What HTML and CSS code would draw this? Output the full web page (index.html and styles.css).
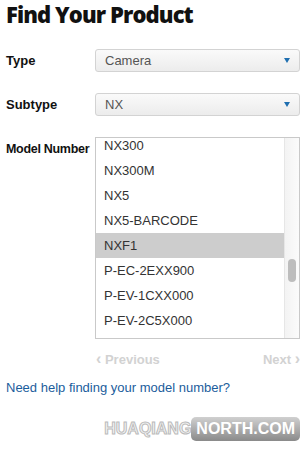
FILE: index.html
```html
<!DOCTYPE html>
<html lang="en">

<head>
    <meta charset="UTF-8">
    <title>Find Your Product</title>
    <link rel="stylesheet" href="styles.css">
</head>

<body>
    <h1 class="title">Find Your Product</h1>

    <div class="form">
        <div class="label">Type</div>
        <div class="select">
            <span>Camera</span>
            <span class="caret"></span>
        </div>

        <div class="label">Subtype</div>
        <div class="select">
            <span>NX</span>
            <span class="caret"></span>
        </div>

        <div class="label model">Model Number</div>
        <div class="listbox">
            <ul class="options">
                <li>NX300</li>
                <li>NX300M</li>
                <li>NX5</li>
                <li>NX5-BARCODE</li>
                <li class="selected">NXF1</li>
                <li>P-EC-2EXX900</li>
                <li>P-EV-1CXX000</li>
                <li>P-EV-2C5X000</li>
            </ul>
            <div class="track">
                <div class="thumb"></div>
            </div>
        </div>
    </div>

    <div class="pager">
        <span class="prev"><b>&lsaquo;</b> Previous</span>
        <span class="next">Next <b>&rsaquo;</b></span>
    </div>

    <a class="help" href="#">Need help finding your model number?</a>

    <div class="mark">
        <span class="mark-left">HUAQIANG</span><span class="mark-right">NORTH.COM</span>
    </div>
</body>

</html>
```
FILE: styles.css
```css
* {
    margin: 0;
    padding: 0;
    box-sizing: border-box;
}

body {
    width: 305px;
    height: 450px;
    padding: 0 5px 0 6px;
    background: #fff;
    font-family: "Liberation Sans", Arial, sans-serif;
    font-size: 13px;
    color: #333;
    overflow: hidden;
}

.title {
    font-family: "Open Sans", sans-serif;
    font-weight: 800;
    font-size: 22px;
    line-height: 28px;
    color: #111;
    letter-spacing: -0.9px;
}

.form {
    display: grid;
    grid-template-columns: 89px 205px;
    row-gap: 21px;
    margin-top: 21px;
    align-items: center;
}

.label {
    font-weight: bold;
    font-size: 13px;
    color: #111;
    white-space: nowrap;
}

.label.model {
    align-self: start;
    margin-top: 5px;
    font-size: 12.5px;
    letter-spacing: -0.3px;
}

.select {
    display: flex;
    justify-content: space-between;
    align-items: center;
    height: 23px;
    padding: 0 9px 0 9px;
    border: 1px solid #d3d3d3;
    border-radius: 3px;
    background: linear-gradient(#fafafa, #ececec);
    color: #555;
}

.caret {
    width: 0;
    height: 0;
    border-left: 3px solid transparent;
    border-right: 3px solid transparent;
    border-top: 5px solid #1f6fb0;
}

.listbox {
    display: flex;
    height: 202px;
    border: 1px solid #c9c9c9;
    overflow: hidden;
}

.options {
    flex: 1;
    list-style: none;
    margin-top: -5px;
}

.options li {
    height: 25px;
    line-height: 25px;
    padding-left: 8px;
    color: #333;
}

.options li.selected {
    background: #cdcdcd;
}

.track {
    width: 15px;
    border-left: 1px solid #e6e6e6;
    background: linear-gradient(90deg, #f3f3f3, #fbfbfb);
}

.thumb {
    width: 8px;
    height: 23px;
    margin: 121px 0 0 3px;
    border-radius: 4px;
    background: #bdbdbd;
}

.pager {
    display: flex;
    justify-content: space-between;
    margin: 11px 0 0 90px;
    font-weight: bold;
    color: #d2d2d2;
}

.pager b {
    font-size: 16px;
}

.help {
    display: block;
    margin-top: 12px;
    color: #1b5d9c;
    text-decoration: none;
}

.mark {
    display: flex;
    justify-content: flex-end;
    margin-top: 22px;
    font-family: "Liberation Sans", Arial, sans-serif;
    font-weight: bold;
    font-size: 16px;
}

.mark-left {
    color: #f4f4f4;
    -webkit-text-stroke: 1px #bbb;
    padding-top: 3px;
}

.mark-right {
    padding: 3px 5px;
    border-radius: 5px;
    background: linear-gradient(#d0d0d0, #8a8a8a);
    color: #fff;
}
```
